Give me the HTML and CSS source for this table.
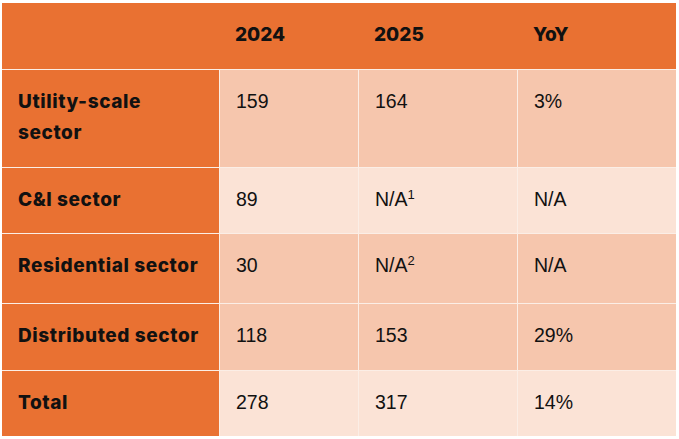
FILE: index.html
```html
<!DOCTYPE html>
<html lang="en">
<head>
<meta charset="utf-8">
<title>Sector table</title>
<link rel="stylesheet" href="styles.css">
</head>
<body>
<table class="grid">
  <colgroup>
    <col class="c-label">
    <col class="c-y24">
    <col class="c-y25">
    <col class="c-yoy">
  </colgroup>
  <thead>
    <tr class="row-head">
      <th class="lbl"></th>
      <th>2024</th>
      <th>2025</th>
      <th>YoY</th>
    </tr>
  </thead>
  <tbody>
    <tr class="row-util band-mid">
      <td class="lbl">Utility-scale<br>sector</td>
      <td>159</td>
      <td>164</td>
      <td>3%</td>
    </tr>
    <tr class="row-ci band-light">
      <td class="lbl">C&amp;I sector</td>
      <td>89</td>
      <td>N/A<sup>1</sup></td>
      <td>N/A</td>
    </tr>
    <tr class="row-res band-mid">
      <td class="lbl">Residential sector</td>
      <td>30</td>
      <td>N/A<sup>2</sup></td>
      <td>N/A</td>
    </tr>
    <tr class="row-dist band-mid">
      <td class="lbl">Distributed sector</td>
      <td>118</td>
      <td>153</td>
      <td>29%</td>
    </tr>
    <tr class="row-total band-light">
      <td class="lbl">Total</td>
      <td>278</td>
      <td>317</td>
      <td>14%</td>
    </tr>
  </tbody>
</table>
</body>
</html>
```

FILE: styles.css
```css
html, body {
  margin: 0;
  padding: 0;
  background: #ffffff;
}

.grid {
  margin: 3px 0 0 2px;
  width: 674px;
  table-layout: fixed;
  border-collapse: separate;
  border-spacing: 0;
  font-family: "Liberation Sans", Arial, sans-serif;
  font-size: 19.5px;
  line-height: 31px;
  color: #111111;
}

.c-label { width: 217px; }
.c-y24 { width: 139px; }
.c-y25 { width: 159px; }
.c-yoy { width: 159px; }

.grid th,
.grid td {
  padding: 16px 8px 0 16px;
  vertical-align: top;
  text-align: left;
}

.grid th {
  background: #e97132;
  font-family: Inter, "Liberation Sans", sans-serif;
  font-weight: 800;
  font-size: 19px;
}

.grid td {
  border-top: 1px solid #fbeee6;
  border-left: 1px solid #fbeee6;
}

.grid td.lbl {
  border-left: 0;
  background: #e97132;
  font-family: Inter, "Liberation Sans", sans-serif;
  font-weight: 800;
  font-size: 19px;
  letter-spacing: 0.6px;
  padding-left: 16px;
}

.band-mid td { background: #f6c6ad; }
.band-light td { background: #fbe3d6; }

.row-head { height: 66px; }
.row-util { height: 98px; }
.row-ci { height: 66px; }
.row-res { height: 70px; }
.row-dist { height: 67px; }
.row-total { height: 66px; }

sup {
  font-size: 13px;
  line-height: 0;
  vertical-align: 7px;
}
```
